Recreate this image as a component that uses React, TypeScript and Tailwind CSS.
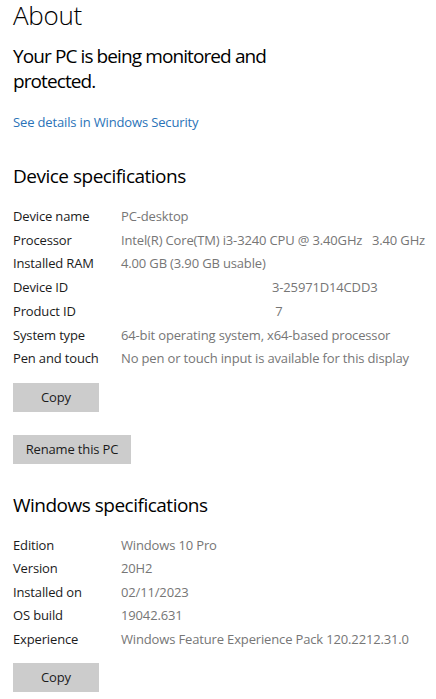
const device: [string, string][] = [
  ['Device name', 'PC-desktop'],
  ['Processor', 'Intel(R) Core(TM) i3-3240 CPU @ 3.40GHz   3.40 GHz'],
  ['Installed RAM', '4.00 GB (3.90 GB usable)'],
  ['Device ID', ''],
  ['Product ID', ''],
  ['System type', '64-bit operating system, x64-based processor'],
  ['Pen and touch', 'No pen or touch input is available for this display'],
]

const windows: [string, string][] = [
  ['Edition', 'Windows 10 Pro'],
  ['Version', '20H2'],
  ['Installed on', '02/11/2023'],
  ['OS build', '19042.631'],
  ['Experience', 'Windows Feature Experience Pack 120.2212.31.0'],
]

function Row({ label, value, extra }: { label: string; value: string; extra?: string }) {
  return (
    <div className="flex whitespace-pre text-[13px] tracking-[-0.15px]">
      <div className="w-[108px] shrink-0 text-[#1b1b1b]">{label}</div>
      {extra ? (
        <div className="pl-[151px] text-[#767676]">{extra}</div>
      ) : (
        <div className="text-[#767676]">{value}</div>
      )}
    </div>
  )
}

function GrayButton({ children, w }: { children: string; w: string }) {
  return (
    <button className={`${w} h-[29px] bg-[#cccccc] text-[13px] tracking-[-0.15px] text-[#1b1b1b] flex items-center justify-center`}>
      {children}
    </button>
  )
}

export default function App() {
  return (
    <div className="w-[436px] h-[699px] overflow-hidden bg-white pl-[13px] font-['Open_Sans',sans-serif] text-black">
      <h1 className="-mt-[1px] text-[26px] leading-[32px] font-light tracking-[-0.3px]">About</h1>

      <p className="mt-[13px] w-[300px] text-[19px] leading-[25px] tracking-[-0.9px]">
        Your PC is being monitored and protected.
      </p>
      <a className="mt-[19px] block text-[13px] leading-[18px] tracking-[-0.15px] text-[#2a73b8]">
        See details in Windows Security
      </a>

      <h2 className="mt-[32px] text-[19px] leading-[26px] tracking-[-0.5px]">Device specifications</h2>
      <div className="mt-[16px] leading-[23.7px]">
        {device.map(([l, v]) => (
          <Row
            key={l}
            label={l}
            value={v}
            extra={l === 'Device ID' ? '3-25971D14CDD3' : l === 'Product ID' ? ' 7' : undefined}
          />
        ))}
      </div>
      <div className="mt-[12px]">
        <GrayButton w="w-[86px]">Copy</GrayButton>
      </div>
      <div className="mt-[23px]">
        <GrayButton w="w-[118px]">Rename this PC</GrayButton>
      </div>

      <h2 className="mt-[28px] text-[19px] leading-[26px] tracking-[-0.5px]">Windows specifications</h2>
      <div className="mt-[16px] leading-[23.5px]">
        {windows.map(([l, v]) => (
          <Row key={l} label={l} value={v} />
        ))}
      </div>
      <div className="mt-[12px]">
        <GrayButton w="w-[86px]">Copy</GrayButton>
      </div>
    </div>
  )
}
